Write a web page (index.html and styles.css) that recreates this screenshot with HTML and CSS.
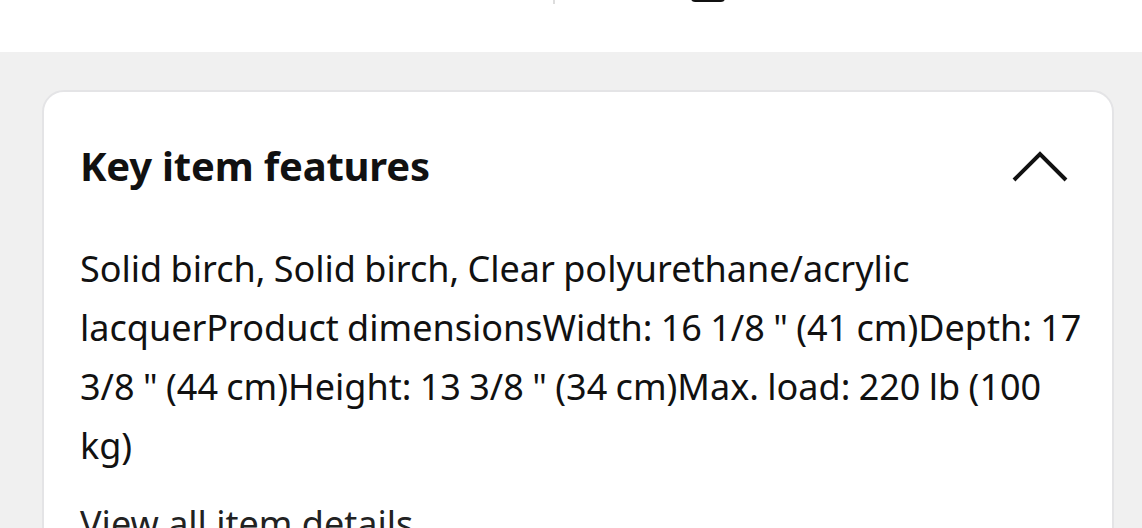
FILE: index.html
```html
<!DOCTYPE html>
<html lang="en">
<head>
<meta charset="utf-8">
<link rel="stylesheet" href="styles.css">
</head>
<body>
<header class="topbar">
  <span class="divider"></span>
  <span class="cart-edge"></span>
</header>
<main class="page">
  <section class="card">
    <div class="card-head">
      <h2 class="title">Key item features</h2>
      <svg class="chevron" width="56" height="32" viewBox="0 0 56 32" aria-hidden="true">
        <path d="M2 30 L28 4 L54 30" fill="none" stroke="#111" stroke-width="4"/>
      </svg>
    </div>
    <p class="desc">Solid birch, Solid birch, Clear polyurethane/acrylic lacquerProduct dimensionsWidth: 16 1/8 " (41 cm)Depth: 17 3/8 " (44 cm)Height: 13 3/8 " (34 cm)Max. load: 220 lb (100 kg)</p>
    <a class="more" href="#">View all item details</a>
  </section>
</main>
</body>
</html>
```
FILE: styles.css
```css
html, body {
  margin: 0;
  padding: 0;
}
body {
  background: #f0f0f0;
  font-family: "Noto Sans", "Open Sans", sans-serif;
  color: #111;
  overflow: hidden;
  height: 528px;
}
.topbar {
  height: 52px;
  background: #fff;
  position: relative;
}
.divider {
  position: absolute;
  left: 553px;
  top: 0;
  width: 2px;
  height: 4px;
  background: #ddd;
}
.cart-edge {
  position: absolute;
  left: 691px;
  top: -6px;
  width: 34px;
  height: 8px;
  border-radius: 0 0 4px 4px;
  background: #111;
}
.page {
  padding: 38px 28px 0 42px;
}
.card {
  background: #fff;
  border: 2px solid #e4e4e6;
  border-radius: 22px;
  padding: 0 24px 0 36px;
  min-height: 600px;
}
.card-head {
  display: flex;
  justify-content: space-between;
  align-items: center;
  height: 147px;
}
.title {
  margin: 0;
  font-size: 40px;
  font-weight: 700;
  letter-spacing: -0.2px;
}
.chevron {
  display: block;
  margin-right: 20px;
}
.desc {
  margin: 0;
  font-size: 36px;
  line-height: 59px;
  word-spacing: -1px;
}
.more {
  display: block;
  margin-top: 24px;
  font-size: 36px;
  color: #222;
  text-decoration: none;
}
```
